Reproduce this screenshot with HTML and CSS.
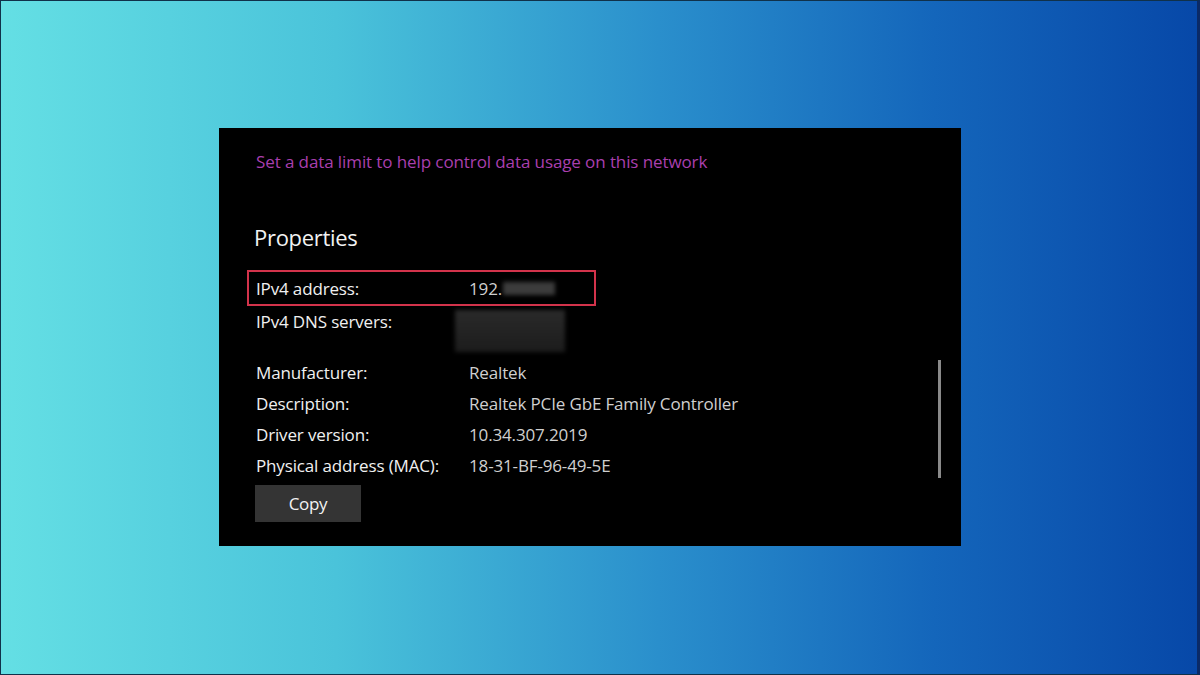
FILE: index.html
```html
<!DOCTYPE html>
<html lang="en">
<head>
<meta charset="utf-8">
<title>Network properties</title>
<link rel="stylesheet" href="styles.css">
</head>
<body>
<div class="stage">
  <div class="panel">
    <div class="data-limit">Set a data limit to help control data usage on this network</div>
    <h2 class="heading">Properties</h2>
    <div class="row row-hl">
      <span class="label">IPv4 address:</span>
      <span class="value">192.<span class="blur blur-ip"></span></span>
    </div>
    <div class="row row-dns">
      <span class="label">IPv4 DNS servers:</span>
      <span class="value value-dns"><span class="blur blur-dns"></span></span>
    </div>
    <div class="group">
      <div class="row"><span class="label">Manufacturer:</span><span class="value">Realtek</span></div>
      <div class="row"><span class="label">Description:</span><span class="value">Realtek PCIe GbE Family Controller</span></div>
      <div class="row"><span class="label">Driver version:</span><span class="value">10.34.307.2019</span></div>
      <div class="row"><span class="label">Physical address (MAC):</span><span class="value">18-31-BF-96-49-5E</span></div>
    </div>
    <button class="copy">Copy</button>
    <div class="scrollbar"></div>
  </div>
</div>
</body>
</html>
```

FILE: styles.css
```css
html, body {
  margin: 0;
  padding: 0;
}
body {
  width: 1200px;
  height: 675px;
  overflow: hidden;
  font-family: "Open Sans", "Noto Sans", sans-serif;
}
.stage {
  box-sizing: border-box;
  width: 1200px;
  height: 675px;
  padding: 127px 0 0 218px;
  background: linear-gradient(90deg, #64dfe4 0%, #4ac3da 28%, #2a8fcc 55%, #1466bb 78%, #0748a8 100%);
  border: 1px solid #10314a;
  border-right-width: 3px;
  border-right-color: #0b2a66;
}
.panel {
  position: relative;
  box-sizing: border-box;
  width: 742px;
  height: 418px;
  background: #000;
  padding: 22px 0 0 37px;
}
.data-limit {
  color: #a93fae;
  font-size: 17px;
  line-height: 24px;
  letter-spacing: -0.1px;
}
.heading {
  margin: 49px 0 0 -2px;
  color: #f2f2f2;
  font-weight: 400;
  font-size: 22px;
  line-height: 28px;
  letter-spacing: -0.3px;
}
.row {
  display: grid;
  grid-template-columns: 213px auto;
  grid-template-rows: 31px;
  height: 31px;
  align-items: center;
  font-size: 17px;
  letter-spacing: -0.15px;
}
.label {
  color: #f0f0f0;
}
.value {
  color: #cfcfcf;
  display: flex;
  align-items: center;
}
.row-hl {
  margin: 19px 0 0 -9px;
  padding-left: 7px;
  width: 338px;
  height: 32px;
  grid-template-rows: 32px;
  border: 2px solid #d3334b;
  grid-template-columns: 213px auto;
}
.row-dns {
  height: 30px;
  grid-template-rows: 30px;
}
.value-dns {
  align-self: start;
  height: 30px;
  align-items: flex-start;
}
.blur {
  display: inline-block;
  filter: blur(2px);
}
.blur-ip {
  width: 52px;
  height: 13px;
  background: #3c3c3c;
  margin-left: 1px;
}
.blur-dns {
  flex: none;
  width: 110px;
  height: 42px;
  margin-left: -14px;
  margin-top: 4px;
  background: linear-gradient(180deg, #2a2a2a 0%, #222 60%, #1c1c1c 100%);
}
.group {
  margin-top: 21px;
}
.copy {
  display: block;
  margin-top: 4px;
  margin-left: -1px;
  width: 106px;
  height: 37px;
  border: none;
  background: #343434;
  color: #f2f2f2;
  font-family: "Open Sans", "Noto Sans", sans-serif;
  font-size: 17px;
  letter-spacing: -0.3px;
  padding: 0;
}
.scrollbar {
  position: absolute;
  left: 719px;
  top: 232px;
  width: 3px;
  height: 118px;
  background: #8a8a8a;
}
```
